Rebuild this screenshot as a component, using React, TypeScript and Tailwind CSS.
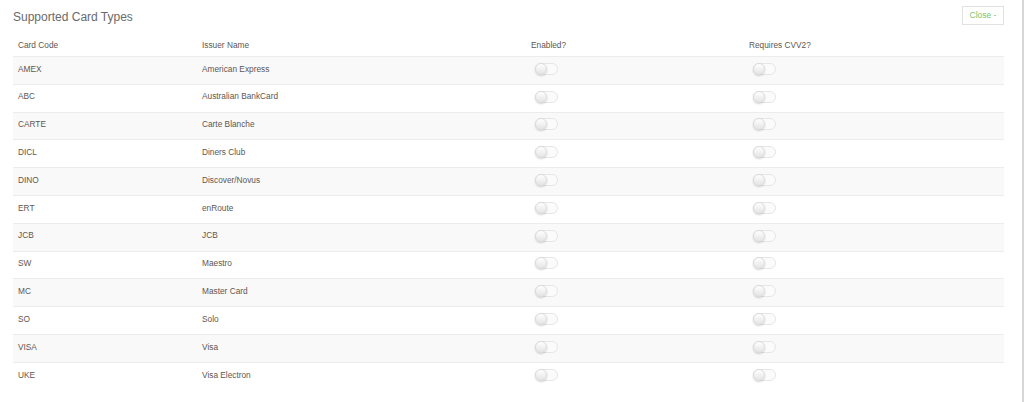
const cards: [string, string][] = [
  ["AMEX", "American Express"],
  ["ABC", "Australian BankCard"],
  ["CARTE", "Carte Blanche"],
  ["DICL", "Diners Club"],
  ["DINO", "Discover/Novus"],
  ["ERT", "enRoute"],
  ["JCB", "JCB"],
  ["SW", "Maestro"],
  ["MC", "Master Card"],
  ["SO", "Solo"],
  ["VISA", "Visa"],
  ["UKE", "Visa Electron"],
];

function Toggle() {
  return (
    <span className="relative inline-block h-[12px] w-[23px] rounded-full border border-[#e6e6e6] bg-[#fbfbfb]">
      <span className="absolute left-[-1px] top-[-1px] h-[12px] w-[12px] rounded-full border border-[#dcdcdc] bg-gradient-to-b from-[#ffffff] to-[#e4e4e4] shadow-[0_1px_2px_rgba(0,0,0,0.18)]" />
    </span>
  );
}

export default function App() {
  return (
    <div
      className="h-[402px] w-[1024px] border-r-2 border-[#d6d6d6] bg-white"
      style={{ fontFamily: '"Liberation Sans", Arial, sans-serif' }}
    >
      <div className="flex items-start justify-between pl-[13px] pr-[18px] pt-[6px]">
        <h2 className="pt-[3px] text-[12px] leading-[16px] text-[#6a6a6a]">Supported Card Types</h2>
        <button className="h-[19px] w-[42px] border border-[#e2e2e2] bg-white text-[8.5px] text-[#7cc46a]">
          Close -
        </button>
      </div>

      <div className="mx-[13px] mt-[8px] w-[991px] text-[8.3px] text-[#5e5752]">
        <div className="grid h-[24px] grid-cols-[184px_329px_218px_260px] items-center border-b border-[#ececec] pt-[2px]">
          <div className="pl-[5px]">Card Code</div>
          <div className="pl-[5px]">Issuer Name</div>
          <div className="pl-[5px]">Enabled?</div>
          <div className="pl-[5px]">Requires CVV2?</div>
        </div>
        {cards.map(([code, name], i) => (
          <div
            key={code}
            className={`grid h-[27.8px] grid-cols-[184px_329px_218px_260px] items-center pb-[3px] ${
              i < cards.length - 1 ? "border-b border-[#ececec]" : ""
            } ${i % 2 === 0 ? "bg-[#f9f9f9]" : "bg-white"}`}
          >
            <div className="pl-[5px]">{code}</div>
            <div className="pl-[5px]">{name}</div>
            <div className="flex pl-[9px]">
              <Toggle />
            </div>
            <div className="flex pl-[9px]">
              <Toggle />
            </div>
          </div>
        ))}
      </div>
    </div>
  );
}
